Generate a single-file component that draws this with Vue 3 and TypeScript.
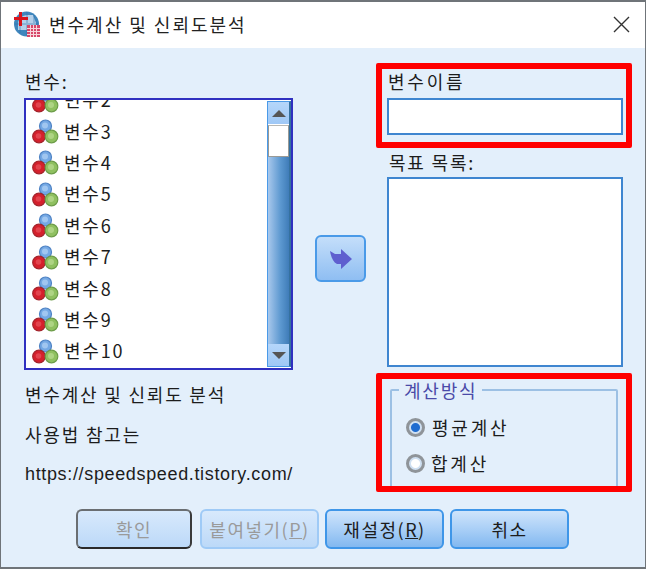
<script setup lang="ts">
const variables = [2, 3, 4, 5, 6, 7, 8, 9, 10].map(n => `변수${n}`)
const buttons = [
  { label: '확인', hotkey: '', kind: 'default-off' },
  { label: '붙여넣기', hotkey: 'P', kind: 'off' },
  { label: '재설정', hotkey: 'R', kind: '' },
  { label: '취소', hotkey: '', kind: '' }
]
</script>

<template>
  <div class="window">
    <header class="titlebar">
      <svg class="app-icon" width="26" height="26" viewBox="0 0 26 26">
        <circle cx="12.500" cy="13" r="12.500" fill="#3f86bd" />
        <path d="M4 13a9 9 0 0 1 9-9h6l3 8v7H4z" fill="#b4d0ea" />
        <path d="M12 1h2v24h-2zM1 12h23v2H1zM5 4h2v18H5zM19 4h2v10h-2z" fill="#2f6fa8" opacity=".3" />
        <rect x="13" y="14" width="13" height="12" fill="#d6486a" />
        <path d="M13 17.500h13M13 20.500h13M13 23.500h13M16.500 14v12M19.500 14v12M22.500 14v12" stroke="#f7d5dc" />
        <path d="M5 1h3v5h6v3H8v6H5V9H0V6h5z" fill="#d8141c" />
      </svg>
      <span class="title">변수계산 및 신뢰도분석</span>
      <svg class="close" width="17" height="17" viewBox="0 0 17 17">
        <path d="M1 1l15 15M16 1L1 16" stroke="#333" stroke-width="1.4" fill="none" />
      </svg>
    </header>

    <div class="content">
      <div class="columns">
        <section class="left">
          <label class="caption">변수:</label>
          <div class="listbox">
            <ul class="items">
              <li v-for="name in variables" :key="name">
                <svg width="30" height="30" viewBox="0 0 30 30">
                  <circle cx="14.500" cy="10" r="6" fill="#74a8e4" stroke="#4f83c4" stroke-width="1.200" />
                  <circle cx="14" cy="9.500" r="3" fill="#a0c6f0" />
                  <circle cx="8" cy="20.500" r="6.300" fill="#d4202c" stroke="#a3242c" stroke-width="1.200" />
                  <circle cx="7.500" cy="20" r="2.800" fill="#e2444e" />
                  <circle cx="20.500" cy="20.500" r="6.300" fill="#8fc060" stroke="#6c9c48" stroke-width="1.200" />
                  <circle cx="20" cy="20" r="3" fill="#aed484" />
                </svg>
                <span>{{ name }}</span>
              </li>
            </ul>
            <div class="scrollbar">
              <div class="sb-btn"><i class="tri up"></i></div>
              <div class="sb-thumb"></div>
              <div class="sb-track"></div>
              <div class="sb-btn"><i class="tri down"></i></div>
            </div>
          </div>
          <div class="notes">
            <p>변수계산 및 신뢰도 분석</p>
            <p>사용법 참고는</p>
            <p class="url">https://speedspeed.tistory.com/</p>
          </div>
        </section>

        <div class="middle">
          <button class="arrow-btn">
            <svg width="26" height="22" viewBox="0 0 26 22">
              <path d="M2 3l5 3h6V1l11 10-11 10v-5H9C5 14 3 9 2 3z" fill="#5f5fcf" />
            </svg>
          </button>
        </div>

        <section class="right">
          <label class="caption name-caption">변수이름</label>
          <div class="field"></div>
          <label class="caption target-caption">목표 목록:</label>
          <div class="target"></div>
          <fieldset class="group">
            <legend>계산방식</legend>
            <div class="radio-row">
              <span class="radio on"></span>
              <span>평균계산</span>
            </div>
            <div class="radio-row">
              <span class="radio"></span>
              <span class="sum">합계산</span>
            </div>
          </fieldset>
        </section>
      </div>

      <footer class="actions">
        <button v-for="b in buttons" :key="b.label" class="btn" :class="b.kind">
          {{ b.label }}<template v-if="b.hotkey">(<u>{{ b.hotkey }}</u>)</template>
        </button>
      </footer>
    </div>

    <div class="mark mark-name"></div>
    <div class="mark mark-group"></div>
  </div>
</template>

<style>
html, body {
  margin: 0;
  background: #e3effb;
}
</style>

<style scoped>
.window {
  position: relative;
  width: 646px;
  height: 569px;
  box-sizing: border-box;
  border: 1px solid #6f7479;
  border-bottom-width: 2px;
  border-top-width: 2px;
  background: #e3effb;
  font-family: "Noto Sans CJK KR", "Liberation Sans", sans-serif;
  font-size: 18px;
  letter-spacing: 1.8px;
  color: #1c1c1c;
  display: flex;
  flex-direction: column;
  overflow: hidden;
}

.titlebar {
  height: 46px;
  flex: none;
  box-sizing: border-box;
  background: #fff;
  display: flex;
  align-items: center;
  padding: 0 15px 2px 13px;
  gap: 9px;
}

.title {
  flex: 1;
  font-size: 18px;
  letter-spacing: 2px;
  color: #222;
}

.content {
  flex: 1;
  display: flex;
  flex-direction: column;
}

.columns {
  display: flex;
  height: 443px;
}

.left {
  width: 269px;
  margin-left: 23px;
  display: flex;
  flex-direction: column;
}

.caption {
  display: block;
  flex: none;
  line-height: 24px;
}

.left > .caption {
  margin-top: 21px;
  height: 29px;
  padding-left: 1px;
}

.listbox {
  height: 272px;
  flex: none;
  box-sizing: border-box;
  border: 2px solid #3030c0;
  background: #fff;
  display: flex;
  overflow: hidden;
}

.items {
  flex: 1;
  list-style: none;
  margin: -16px 0 0;
  padding: 0;
}

.items li {
  height: 31.400px;
  display: flex;
  align-items: center;
  padding-left: 5px;
  gap: 3px;
  line-height: 31px;
}

.scrollbar {
  width: 24px;
  flex: none;
  display: flex;
  flex-direction: column;
  box-sizing: border-box;
  margin: 1px 0;
  border: 1px solid #4a9ae8;
  border-right: 2px solid #35719f;
}

.sb-btn {
  height: 22px;
  flex: none;
  background: linear-gradient(#b5d6fa, #9fc8f6);
  display: flex;
  align-items: center;
  justify-content: center;
}

.sb-thumb {
  height: 32px;
  flex: none;
  box-sizing: border-box;
  background: #fff;
  border: 1px solid #9a9a96;
  border-top-color: #b8b8b4;
  margin: 1px 0 0;
}

.sb-track {
  flex: 1;
  background: linear-gradient(90deg, #a8c8ec, #5c98d0 60%, #3f7cb8);
}

.tri {
  display: block;
  width: 0;
  height: 0;
  border-left: 7px solid transparent;
  border-right: 7px solid transparent;
}

.tri.up {
  border-bottom: 7px solid #555;
}

.tri.down {
  border-top: 7px solid #555;
}

.notes {
  flex: none;
  margin-top: 4px;
  padding-left: 1px;
}

.notes p {
  margin: 0;
  height: 40px;
  line-height: 40px;
}

.url {
  font-family: "Liberation Sans", sans-serif;
  letter-spacing: 0.65px;
}

.middle {
  width: 95px;
  display: flex;
  justify-content: center;
  padding-top: 187px;
  box-sizing: border-box;
}

.arrow-btn {
  width: 51px;
  height: 47px;
  padding: 0;
  box-sizing: border-box;
  border: 2px solid #4a9ae8;
  border-radius: 6px;
  background: linear-gradient(#c4defa, #8fbef2);
  display: flex;
  align-items: center;
  justify-content: center;
}

.right {
  width: 236px;
  margin-left: -1px;
  display: flex;
  flex-direction: column;
}

.name-caption {
  margin-top: 21px;
  height: 29px;
  padding-left: 1px;
  letter-spacing: 2.8px;
}

.field {
  height: 37px;
  flex: none;
  box-sizing: border-box;
  border: 2px solid #3f86d0;
  background: #fff;
}

.target-caption {
  margin-top: 15px;
  height: 27px;
  padding-left: 2px;
}

.target {
  height: 190px;
  flex: none;
  box-sizing: border-box;
  border: 2px solid #3f86d0;
  background: #fff;
}

.group {
  margin: 13px 5px 0 3px;
  padding: 9px 0 0 14px;
  height: 110px;
  flex: none;
  box-sizing: border-box;
  border: 2px solid #9cc0e4;
  border-radius: 2px;
}

.group legend {
  margin-left: -7px;
  padding: 0 5px;
  color: #4a4aa8;
  line-height: 20px;
}

.radio-row {
  height: 36px;
  display: flex;
  align-items: center;
  gap: 7px;
  letter-spacing: 2.8px;
}

.sum {
  margin-left: -1px;
}

.radio {
  width: 19px;
  height: 19px;
  box-sizing: border-box;
  border-radius: 50%;
  border: 3px solid #8f9499;
  background: radial-gradient(circle, #fff 0 4px, #cfe0f2 5px 8px);
}

.radio.on {
  background: radial-gradient(circle, #1f6cd0 0 4px, #cfe0f2 5px 8px);
}

.actions {
  display: flex;
  padding-left: 75px;
  gap: 6px;
  margin-top: 18px;
}

.btn {
  width: 119px;
  height: 40px;
  box-sizing: border-box;
  border: 2px solid #3f96e8;
  border-radius: 6px;
  background: linear-gradient(#cfe4fb, #a6cdf6 55%, #82b8f0);
  font: inherit;
  letter-spacing: 1.5px;
  color: #1c1c1c;
  padding: 0;
}

.btn.off,
.btn.default-off {
  background: linear-gradient(#d8e9fc, #bcd9f8);
  color: #9a9a9a;
}

.btn.off {
  border-color: #9fcaf6;
}

.btn.default-off {
  width: 116px;
  margin-right: 2px;
  border-color: #6a6e72;
  border-bottom-color: #2a2a2a;
  border-right-color: #3a3a3a;
}

.mark {
  position: absolute;
  box-sizing: border-box;
  border: 6px solid #f00;
  border-radius: 2px;
  pointer-events: none;
}

.mark-name {
  left: 375px;
  top: 61px;
  width: 256px;
  height: 85px;
}

.mark-group {
  left: 375px;
  top: 371px;
  width: 256px;
  height: 119px;
}
</style>
